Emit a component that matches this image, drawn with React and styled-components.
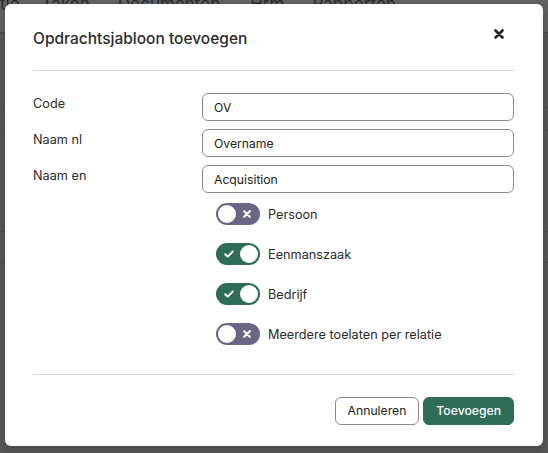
import React from 'react';
import styled, { createGlobalStyle } from 'styled-components';

const GlobalStyle = createGlobalStyle`
  html, body {
    margin: 0;
    padding: 0;
    width: 548px;
    height: 453px;
    overflow: hidden;
    background: #5b5b5b;
    font-family: Inter, "Noto Sans", sans-serif;
  }
`;

const Page = styled.div`
  position: relative;
  width: 548px;
  height: 453px;
  overflow: hidden;
  background: #585858;
`;

const NavBar = styled.div`
  height: 32px;
  background: #646464;
  border-bottom: 1px solid #4c4c4c;
  display: flex;
  align-items: flex-end;
  font-size: 17px;
  color: #2a2a2a;
  line-height: 1;
  overflow: hidden;
`;

const NavItem = styled.span`
  margin-left: ${(p) => p.$left}px;
  transform: translateY(-19px);
  white-space: nowrap;
`;

const BgRow = styled.div`
  height: ${(p) => p.$h}px;
  border-bottom: 1px solid #4f4f4f;
`;

const Overlay = styled.div`
  position: absolute;
  inset: 0;
`;

const Modal = styled.div`
  position: absolute;
  left: 5px;
  top: 4px;
  width: 538px;
  height: 442px;
  background: #fff;
  border-radius: 6px;
  box-sizing: border-box;
  padding: 0 29px 0 28px;
  display: flex;
  flex-direction: column;
  box-shadow: 0 2px 8px rgba(0, 0, 0, 0.25);
`;

const Header = styled.div`
  height: 66px;
  display: flex;
  align-items: center;
  justify-content: space-between;
  border-bottom: 1px solid #d6d6d6;
`;

const Title = styled.h2`
  margin: 0;
  font-size: 15.5px;
  font-weight: 500;
  color: #2b2b2b;
  padding-top: 2px;
`;

const Close = styled.button`
  border: 0;
  background: none;
  padding: 0;
  margin-right: 10px;
  margin-top: -6px;
  width: 10px;
  height: 10px;
  display: flex;
  cursor: pointer;
`;

const Body = styled.div`
  flex: 1;
  padding-top: 22px;
  border-bottom: 1px solid #d6d6d6;
  display: flex;
  flex-direction: column;
`;

const FieldRow = styled.div`
  display: grid;
  grid-template-columns: 169px 1fr;
  align-items: center;
  margin-bottom: 8px;
`;

const Label = styled.label`
  font-size: 12.7px;
  color: #2b2b2b;
  align-self: start;
  padding-top: 3px;
`;

const Input = styled.input`
  height: 28px;
  box-sizing: border-box;
  border: 1px solid #8a8a8a;
  border-radius: 6px;
  padding: 0 11px;
  font-family: inherit;
  font-size: 12.2px;
  color: #222;
  width: 100%;
  outline: none;
`;

const Switches = styled.div`
  display: flex;
  flex-direction: column;
  gap: 18px;
  padding-left: 183px;
  padding-top: 2px;
`;

const SwitchRow = styled.label`
  display: flex;
  align-items: center;
  gap: 8px;
  font-size: 12.7px;
  color: #2b2b2b;
  height: 22px;
`;

const Track = styled.span`
  width: 44px;
  height: 22px;
  border-radius: 11px;
  background: ${(p) => (p.$on ? '#2e6d58' : '#6b6586')};
  display: flex;
  align-items: center;
  flex-direction: ${(p) => (p.$on ? 'row' : 'row-reverse')};
  padding: 0 2px;
  box-sizing: border-box;
`;

const IconSlot = styled.span`
  flex: 1;
  display: flex;
  align-items: center;
  justify-content: center;
`;

const Knob = styled.span`
  width: 18px;
  height: 18px;
  border-radius: 50%;
  background: #fff;
`;

const Footer = styled.div`
  height: 72px;
  display: flex;
  justify-content: flex-end;
  align-items: center;
  gap: 4px;
  margin-top: -1px;
`;

const Button = styled.button`
  height: 28px;
  border-radius: 6px;
  font-family: inherit;
  font-size: 12.2px;
  padding: 0 12px;
  border: 1px solid ${(p) => (p.$primary ? '#2e6d58' : '#8a8a8a')};
  background: ${(p) => (p.$primary ? '#2e6d58' : '#fff')};
  color: ${(p) => (p.$primary ? '#fff' : '#222')};
  font-weight: ${(p) => (p.$primary ? 500 : 400)};
  margin-top: 1px;
  cursor: pointer;
`;

const CheckIcon = () => (
  <svg width="10" height="8" viewBox="0 0 10 8">
    <path d="M1.2 4.2 L3.8 6.6 L8.8 1.4" fill="none" stroke="#fff" strokeWidth="2" strokeLinecap="round" strokeLinejoin="round" />
  </svg>
);

const XIcon = ({ size = 8, color = '#fff', w = 2 }) => (
  <svg width={size} height={size} viewBox="0 0 10 10">
    <path d="M1.5 1.5 L8.5 8.5 M8.5 1.5 L1.5 8.5" fill="none" stroke={color} strokeWidth={w} strokeLinecap="round" />
  </svg>
);

const Switch = ({ on, label }) => (
  <SwitchRow>
    <Track $on={on}>
      <IconSlot>{on ? <CheckIcon /> : <XIcon size={8} w={2.6} />}</IconSlot>
      <Knob />
    </Track>
    {label}
  </SwitchRow>
);

const fields = [
  { label: 'Code', value: 'OV' },
  { label: 'Naam nl', value: 'Overname' },
  { label: 'Naam en', value: 'Acquisition' },
];

const switches = [
  { label: 'Persoon', on: false },
  { label: 'Eenmanszaak', on: true },
  { label: 'Bedrijf', on: true },
  { label: 'Meerdere toelaten per relatie', on: false },
];

export default function App() {
  return (
    <>
      <GlobalStyle />
      <Page>
        <NavBar>
          <NavItem $left={0}>tie</NavItem>
          <NavItem $left={22}>Taken</NavItem>
          <NavItem $left={28}>Documenten</NavItem>
          <NavItem $left={30}>Hrm</NavItem>
          <NavItem $left={28}>Rapporten</NavItem>
        </NavBar>
        <BgRow $h={74} />
        <BgRow $h={22} />
        <BgRow $h={100} />
        <BgRow $h={30} />
        <Overlay>
          <Modal>
            <Header>
              <Title>Opdrachtsjabloon toevoegen</Title>
              <Close aria-label="Sluiten">
                <XIcon size={10} color="#222" w={2.6} />
              </Close>
            </Header>
            <Body>
              {fields.map((f) => (
                <FieldRow key={f.label}>
                  <Label>{f.label}</Label>
                  <Input defaultValue={f.value} />
                </FieldRow>
              ))}
              <Switches>
                {switches.map((s) => (
                  <Switch key={s.label} on={s.on} label={s.label} />
                ))}
              </Switches>
            </Body>
            <Footer>
              <Button>Annuleren</Button>
              <Button $primary>Toevoegen</Button>
            </Footer>
          </Modal>
        </Overlay>
      </Page>
    </>
  );
}
